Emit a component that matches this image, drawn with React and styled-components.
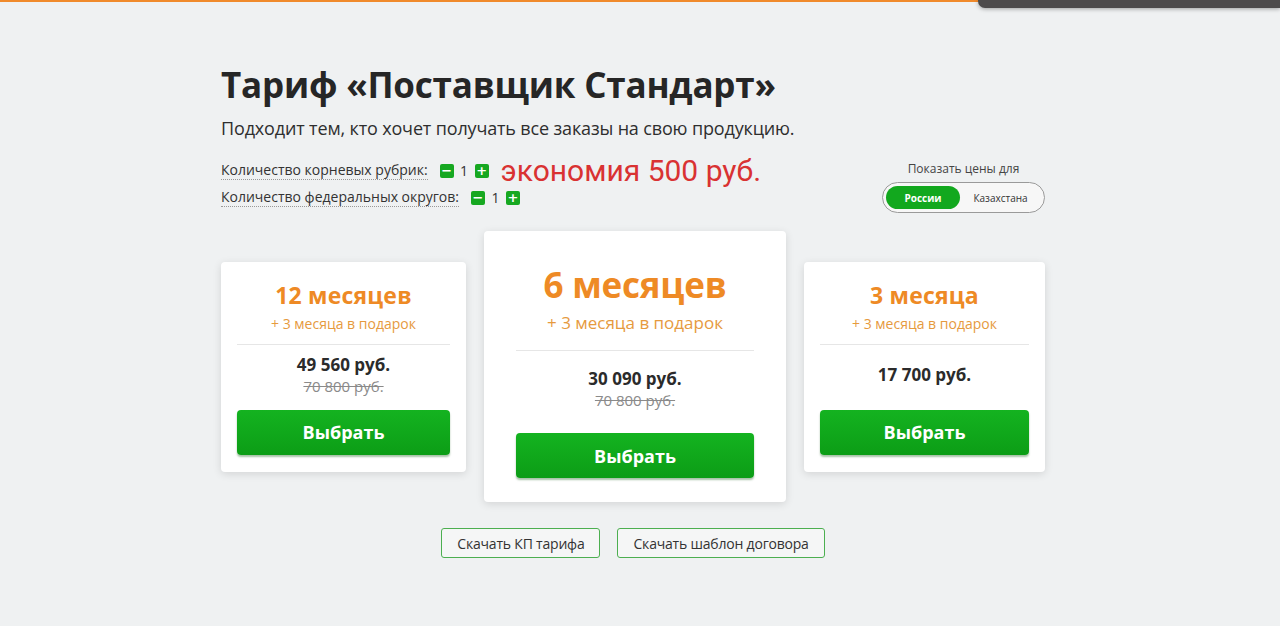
import React, { useState } from "react";
import styled, { createGlobalStyle } from "styled-components";

const GlobalStyle = createGlobalStyle`
  html, body {
    margin: 0;
    padding: 0;
    background: #eff1f2;
    font-family: "Open Sans", "Noto Sans", sans-serif;
    color: #2b2b2b;
  }
`;

const plans = [
  { id: 12, title: "12 месяцев", price: "49 560 руб.", old: "70 800 руб.", width: 245 },
  { id: 6, title: "6 месяцев", price: "30 090 руб.", old: "70 800 руб.", width: 302, big: true },
  { id: 3, title: "3 месяца", price: "17 700 руб.", old: null, width: 241 },
];

const App = () => {
  const [region, setRegion] = useState("ru");
  const [roots, setRoots] = useState(1);
  const [districts, setDistricts] = useState(1);

  return (
    <>
      <GlobalStyle />
      <TopLine />
      <TopOverlay />
      <Wrapper>
        <Title>Тариф «Поставщик Стандарт»</Title>
        <Subtitle>Подходит тем, кто хочет получать все заказы на свою продукцию.</Subtitle>

        <ControlsRow>
          <Options>
            <OptionRow>
              <OptionLabel>Количество корневых рубрик:</OptionLabel>
              <Stepper>
                <StepBtn onClick={() => setRoots(Math.max(1, roots - 1))}>−</StepBtn>
                <StepValue>{roots}</StepValue>
                <StepBtn onClick={() => setRoots(roots + 1)}>+</StepBtn>
              </Stepper>
              <Saving>экономия 500 руб.</Saving>
            </OptionRow>
            <OptionRow>
              <OptionLabel>Количество федеральных округов:</OptionLabel>
              <Stepper>
                <StepBtn onClick={() => setDistricts(Math.max(1, districts - 1))}>−</StepBtn>
                <StepValue>{districts}</StepValue>
                <StepBtn onClick={() => setDistricts(districts + 1)}>+</StepBtn>
              </Stepper>
            </OptionRow>
          </Options>

          <RegionBox>
            <RegionLabel>Показать цены для</RegionLabel>
            <Toggle>
              <ToggleItem $active={region === "ru"} onClick={() => setRegion("ru")}>
                России
              </ToggleItem>
              <ToggleItem $active={region === "kz"} onClick={() => setRegion("kz")}>
                Казахстана
              </ToggleItem>
            </Toggle>
          </RegionBox>
        </ControlsRow>

        <Cards>
          {plans.map((p) => (
            <Card key={p.id} $width={p.width} $big={p.big}>
              <PlanTitle $big={p.big}>{p.title}</PlanTitle>
              <Gift $big={p.big}>+ 3 месяца в подарок</Gift>
              <Divider $big={p.big} />
              <PriceBlock $big={p.big}>
                <Price>{p.price}</Price>
                {p.old && <OldPrice>{p.old}</OldPrice>}
              </PriceBlock>
              <SelectButton>Выбрать</SelectButton>
            </Card>
          ))}
        </Cards>

        <Downloads>
          <OutlineButton>Скачать КП тарифа</OutlineButton>
          <OutlineButton>Скачать шаблон договора</OutlineButton>
        </Downloads>
      </Wrapper>
    </>
  );
};

export default App;

const TopLine = styled.div`
  height: 2px;
  width: 100%;
  background: #f08a2c;
`;

const TopOverlay = styled.div`
  position: absolute;
  top: 0;
  right: 0;
  width: 302px;
  height: 8px;
  background: #4d4b4b;
  border-bottom-left-radius: 7px;
  box-shadow: 0 1px 4px rgba(0, 0, 0, 0.35);
`;

const Wrapper = styled.div`
  width: 824px;
  padding-right: 14px;
  margin: 0 auto;
`;

const Title = styled.h1`
  margin: 58px 0 0;
  font-size: 35px;
  line-height: 50px;
  font-weight: 700;
  letter-spacing: -0.2px;
  color: #262626;
`;

const Subtitle = styled.p`
  margin: 6px 0 0;
  font-size: 18px;
  line-height: 24px;
  letter-spacing: -0.15px;
  color: #2e2e2e;
`;

const ControlsRow = styled.div`
  display: flex;
  justify-content: space-between;
  align-items: flex-start;
  margin-top: 19px;
`;

const Options = styled.div`
  display: flex;
  flex-direction: column;
  gap: 4px;
`;

const OptionRow = styled.div`
  display: flex;
  align-items: center;
  height: 23px;
`;

const OptionLabel = styled.span`
  font-size: 14px;
  color: #333;
  border-bottom: 1px dotted #999;
  line-height: 18px;
  margin-right: 12px;
`;

const Stepper = styled.div`
  display: flex;
  align-items: center;
`;

const StepBtn = styled.button`
  width: 14px;
  height: 14px;
  padding: 0;
  border: none;
  border-radius: 2px;
  background: #16a821;
  color: #fff;
  font-size: 13px;
  font-weight: 700;
  line-height: 14px;
  display: flex;
  align-items: center;
  justify-content: center;
  cursor: pointer;
  font-family: "DejaVu Sans", sans-serif;
`;

const StepValue = styled.span`
  font-size: 14px;
  color: #333;
  width: 21px;
  text-align: center;
`;

const Saving = styled.span`
  font-family: Roboto, "Noto Sans", sans-serif;
  font-size: 30px;
  color: #d93232;
  margin-left: 12px;
  line-height: 30px;
`;

const RegionBox = styled.div`
  display: flex;
  flex-direction: column;
  align-items: center;
  margin-top: 1px;
`;

const RegionLabel = styled.div`
  font-size: 12px;
  color: #444;
  margin-bottom: 5px;
`;

const Toggle = styled.div`
  display: flex;
  align-items: center;
  width: 163px;
  height: 31px;
  box-sizing: border-box;
  padding: 3px;
  border: 1px solid #9a9a9a;
  border-radius: 16px;
  background: #f7f7f7;
`;

const ToggleItem = styled.button`
  flex: ${(p) => (p.$active ? "0 0 74px" : "1")};
  height: 23px;
  border: none;
  border-radius: 12px;
  background: ${(p) => (p.$active ? "#12a81e" : "transparent")};
  color: ${(p) => (p.$active ? "#fff" : "#333")};
  font-family: inherit;
  font-size: 10px;
  font-weight: ${(p) => (p.$active ? 700 : 400)};
  cursor: pointer;
  padding: 0;
`;

const Cards = styled.div`
  display: flex;
  justify-content: space-between;
  align-items: center;
  margin-top: 18px;
`;

const Card = styled.div`
  width: ${(p) => p.$width}px;
  box-sizing: border-box;
  background: #fff;
  border-radius: 4px;
  box-shadow: 0 2px 8px rgba(0, 0, 0, 0.12);
  padding: ${(p) => (p.$big ? "32px 32px 24px" : "15px 16px 17px")};
  display: flex;
  flex-direction: column;
  align-items: center;
`;

const PlanTitle = styled.div`
  font-size: ${(p) => (p.$big ? "35px" : "23px")};
  line-height: ${(p) => (p.$big ? "44px" : "36px")};
  font-weight: 700;
  color: #ee8a25;
  letter-spacing: ${(p) => (p.$big ? "-0.2px" : "0.2px")};
`;

const Gift = styled.div`
  font-size: ${(p) => (p.$big ? "17px" : "14px")};
  line-height: ${(p) => (p.$big ? "26px" : "20px")};
  color: #e69a3e;
  margin-top: ${(p) => (p.$big ? "3px" : "1px")};
`;

const Divider = styled.div`
  align-self: stretch;
  height: 1px;
  background: #e6e6e6;
  margin-top: ${(p) => (p.$big ? "14px" : "10px")};
`;

const PriceBlock = styled.div`
  align-self: stretch;
  height: ${(p) => (p.$big ? "82px" : "65px")};
  display: flex;
  flex-direction: column;
  align-items: center;
  justify-content: center;
  padding-bottom: ${(p) => (p.$big ? "6px" : "4px")};
  box-sizing: border-box;
`;

const Price = styled.div`
  font-size: 17px;
  line-height: 22px;
  font-weight: 700;
  color: #2b2b2b;
`;

const OldPrice = styled.div`
  font-size: 15px;
  line-height: 20px;
  color: #8a8a8a;
  text-decoration: line-through;
`;

const SelectButton = styled.button`
  align-self: stretch;
  height: 45px;
  border: none;
  border-radius: 4px;
  background: linear-gradient(#14b320, #0c9d16);
  box-shadow: 0 2px 2px rgba(0, 80, 0, 0.35);
  color: #fff;
  font-family: inherit;
  font-size: 18px;
  font-weight: 700;
  cursor: pointer;
`;

const Downloads = styled.div`
  display: flex;
  justify-content: center;
  gap: 17px;
  margin-top: 26px;
`;

const OutlineButton = styled.button`
  height: 30px;
  padding: 0 15px;
  border: 1px solid #4caf50;
  border-radius: 3px;
  background: #f5f6f6;
  color: #333;
  font-family: inherit;
  font-size: 14px;
  letter-spacing: -0.2px;
  cursor: pointer;
`;
